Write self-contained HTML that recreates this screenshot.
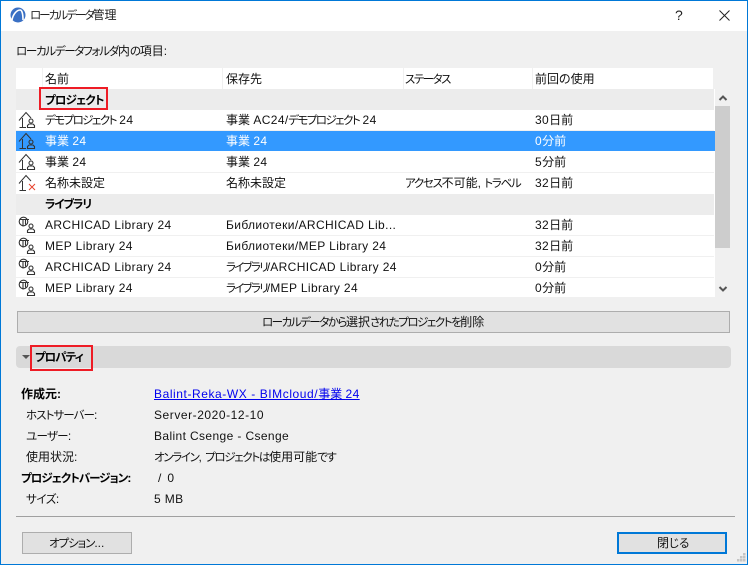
<!DOCTYPE html>
<html lang="ja"><head><meta charset="utf-8"><title>ローカルデータ管理</title>
<style>
html,body{margin:0;padding:0;background:#f0f0f0}
#w{position:relative;width:748px;height:565px;overflow:hidden;background:#f0f0f0;font:12px/16px "Liberation Sans","Noto Sans CJK JP",sans-serif;color:#111;font-feature-settings:"palt" 1}
#w div{position:absolute;box-sizing:border-box}
.t{white-space:nowrap;height:16px}
.b{font-weight:bold;color:#000}
.s{color:#fff}
i{font-style:normal;letter-spacing:.38px}
u{text-decoration:none;font-size:11.5px}
svg{position:absolute;overflow:visible}
</style></head><body><div id="w">
<div style="left:0;top:0;width:748px;height:31px;background:#fff"></div>
<div style="left:0;top:0;width:748px;height:1px;background:#0078d7"></div>
<div style="left:0;top:0;width:1px;height:565px;background:#0078d7"></div>
<div style="left:747px;top:0;width:1px;height:565px;background:#0078d7"></div>
<div style="left:0;top:564px;width:748px;height:1px;background:#0078d7"></div>

<svg style="left:10px;top:7px" width="16" height="16" viewBox="0 0 16 16"><circle cx="8" cy="8" r="7.5" fill="#3a70c4"/><path d="M2 13C3 7 7 3 10 3C12 3 13 7 13 13" fill="none" stroke="#fff" stroke-width="1.6"/></svg>
<div class="t" style="left:30px;top:7px;color:#222"><u style="letter-spacing:-1.95px">ローカルデータ</u>管理</div>
<div class="t" style="left:675px;top:7px;font-size:14px;color:#222">?</div>
<svg style="left:719px;top:10px" width="11" height="11" viewBox="0 0 11 11"><path d="M.5 .5L10.5 10.5M10.5 .5L.5 10.5" stroke="#222" fill="none"/></svg>

<div class="t" style="left:16px;top:43px"><u style="letter-spacing:-1.28px">ローカルデータフォルダ</u>内<u style="letter-spacing:-1.28px">の</u>項目:</div>

<div style="left:16px;top:68px;width:697px;height:21px;background:#fff"></div>
<div style="left:42px;top:68px;width:1px;height:21px;background:#f0f0f0"></div>
<div style="left:222px;top:68px;width:1px;height:21px;background:#f0f0f0"></div>
<div style="left:403px;top:68px;width:1px;height:21px;background:#f0f0f0"></div>
<div style="left:532px;top:68px;width:1px;height:21px;background:#f0f0f0"></div>
<div class="t" style="left:45px;top:71px">名前</div>
<div class="t" style="left:226px;top:71px">保存先</div>
<div class="t" style="left:405px;top:71px"><u style="letter-spacing:-1.51px">ステータス</u></div>
<div class="t" style="left:535px;top:71px">前回の使用</div>

<div style="left:16px;top:89px;width:699px;height:208px;background:#fff"></div>
<div style="left:16px;top:89px;width:698px;height:21px;background:#ececec"></div>
<div style="left:16px;top:194px;width:698px;height:21px;background:#ececec"></div>
<div style="left:16px;top:130px;width:698px;height:1px;background:#f0f0f0"></div>
<div style="left:16px;top:131px;width:699px;height:20px;background:#3399ff"></div>
<div style="left:16px;top:172px;width:698px;height:1px;background:#f0f0f0"></div>
<div style="left:16px;top:235px;width:698px;height:1px;background:#f0f0f0"></div>
<div style="left:16px;top:256px;width:698px;height:1px;background:#f0f0f0"></div>
<div style="left:16px;top:277px;width:698px;height:1px;background:#f0f0f0"></div>

<div class="t b" style="left:45px;top:92px"><u style="letter-spacing:-.85px">プロジェクト</u></div>
<div class="t b" style="left:45px;top:196px"><u style="letter-spacing:-1.15px">ライブラリ</u></div>

<svg width="0" height="0" style="left:0;top:0"><defs>
<g id="house" fill="none" stroke="#333" stroke-width="1"><path d="M1 9.5L8 1.5L13 7"/><path d="M4.5 7V16.5M1.5 16.5H8"/></g>
<g id="person" fill="none" stroke="#333" stroke-width="1.1"><circle cx="13" cy="10" r="2"/><path d="M9.5 16.5V14.5L11 13H15L16.5 14.5V16.5Z"/></g>
<g id="lib" fill="none" stroke="#333" stroke-width="1.1"><circle cx="5.5" cy="5.5" r="4.3"/><path d="M1.5 3.5H11M5 3.5V10.5M7.5 3.5V8.5"/></g>
</defs></svg>
<svg style="left:18px;top:111px" width="18" height="18"><use href="#house"/><use href="#person"/></svg>
<svg style="left:18px;top:132px" width="18" height="18"><use href="#house"/><use href="#person"/></svg>
<svg style="left:18px;top:153px" width="18" height="18"><use href="#house"/><use href="#person"/></svg>
<svg style="left:18px;top:174px" width="18" height="18"><use href="#house"/><path d="M11 10L17 16M17 10L11 16" stroke="#e8432e" fill="none"/></svg>
<svg style="left:18px;top:216px" width="18" height="18"><use href="#lib"/><use href="#person"/></svg>
<svg style="left:18px;top:237px" width="18" height="18"><use href="#lib"/><use href="#person"/></svg>
<svg style="left:18px;top:258px" width="18" height="18"><use href="#lib"/><use href="#person"/></svg>
<svg style="left:18px;top:279px" width="18" height="18"><use href="#lib"/><use href="#person"/></svg>

<div class="t" style="left:45px;top:112px"><u style="letter-spacing:-1.55px">デモプロジェクト</u> <i>24</i></div><div class="t" style="left:226px;top:112px">事業 <i>AC24</i>/<u style="letter-spacing:-1.55px">デモプロジェクト</u> <i>24</i></div><div class="t" style="left:535px;top:112px"><i>30</i>日前</div>
<div class="t s" style="left:45px;top:133px">事業 <i>24</i></div><div class="t s" style="left:226px;top:133px">事業 <i>24</i></div><div class="t s" style="left:535px;top:133px"><i>0</i>分前</div>
<div class="t" style="left:45px;top:154px">事業 <i>24</i></div><div class="t" style="left:226px;top:154px">事業 <i>24</i></div><div class="t" style="left:535px;top:154px"><i>5</i>分前</div>
<div class="t" style="left:45px;top:175px">名称未設定</div><div class="t" style="left:226px;top:175px">名称未設定</div><div class="t" style="left:405px;top:175px"><u style="letter-spacing:-1.29px">アクセス</u>不可能, <u style="letter-spacing:-1.29px">トラベル</u></div><div class="t" style="left:535px;top:175px"><i>32</i>日前</div>
<div class="t" style="left:45px;top:217px"><i>ARCHICAD Library 24</i></div><div class="t" style="left:226px;top:217px"><i>Библиотеки/ARCHICAD Lib...</i></div><div class="t" style="left:535px;top:217px"><i>32</i>日前</div>
<div class="t" style="left:45px;top:238px"><i>MEP Library 24</i></div><div class="t" style="left:226px;top:238px"><i>Библиотеки/MEP Library 24</i></div><div class="t" style="left:535px;top:238px"><i>32</i>日前</div>
<div class="t" style="left:45px;top:259px"><i>ARCHICAD Library 24</i></div><div class="t" style="left:226px;top:259px"><u style="letter-spacing:-1.73px">ライブラリ</u>/<i>ARCHICAD Library 24</i></div><div class="t" style="left:535px;top:259px"><i>0</i>分前</div>
<div class="t" style="left:45px;top:280px"><i>MEP Library 24</i></div><div class="t" style="left:226px;top:280px"><u style="letter-spacing:-1.73px">ライブラリ</u>/<i>MEP Library 24</i></div><div class="t" style="left:535px;top:280px"><i>0</i>分前</div>

<div style="left:715px;top:106px;width:15px;height:142px;background:#cdcdcd"></div>
<svg style="left:719px;top:95px" width="8" height="6"><path d="M.5 5L4 1.5L7.5 5" fill="none" stroke="#555" stroke-width="2"/></svg>
<svg style="left:719px;top:286px" width="8" height="6"><path d="M.5 1L4 4.5L7.5 1" fill="none" stroke="#555" stroke-width="2"/></svg>

<div style="left:17px;top:311px;width:713px;height:22px;background:#e1e1e1;border:1px solid #adadad"></div>
<div class="t" style="left:262px;top:314px"><u style="letter-spacing:-1.47px">ローカルデータから</u>選択<u style="letter-spacing:-1.47px">されたプロジェクトを</u>削除</div>

<div style="left:16px;top:346px;width:715px;height:22px;background:#d9d9d9;border-radius:4px"></div>
<svg style="left:22px;top:355px" width="8" height="5"><path d="M0 0H8L4 4Z" fill="#555"/></svg>
<div class="t b" style="left:35px;top:349px"><u style="letter-spacing:-1.05px">プロパティ</u></div>

<div style="left:39px;top:87px;width:69px;height:23px;border:2px solid #ee1c25"></div>
<div style="left:30px;top:345px;width:63px;height:26px;border:2px solid #ee1c25"></div>

<div class="t b" style="left:21px;top:386px">作成元:</div>
<div class="t" style="left:154px;top:386px;color:#00e;text-decoration:underline"><i style="letter-spacing:.57px">Balint-Reka-WX - BIMcloud/</i>事業 <i>24</i></div>
<div class="t" style="left:26px;top:407px"><u style="letter-spacing:-.95px">ホストサーバー</u>:</div><div class="t" style="left:154px;top:407px"><i style="letter-spacing:.55px">Server-2020-12-10</i></div>
<div class="t" style="left:26px;top:428px"><u style="letter-spacing:-.7px">ユーザー</u>:</div><div class="t" style="left:154px;top:428px"><i>Balint Csenge - Csenge</i></div>
<div class="t" style="left:26px;top:449px">使用状況:</div><div class="t" style="left:154px;top:449px"><u style="letter-spacing:-1.32px">オンライン</u>, <u style="letter-spacing:-1.32px">プロジェクトは</u>使用可能<u style="letter-spacing:-1.32px">です</u></div>
<div class="t b" style="left:21px;top:470px"><u style="letter-spacing:-.97px">プロジェクトバージョン</u>:</div><div class="t" style="left:158px;top:470px;word-spacing:2px"><i>/ 0</i></div>
<div class="t" style="left:26px;top:491px"><u style="letter-spacing:-.45px">サイズ</u>:</div><div class="t" style="left:154px;top:491px"><i>5 MB</i></div>

<div style="left:16px;top:516px;width:719px;height:1px;background:#a0a0a0"></div>

<div style="left:22px;top:532px;width:110px;height:22px;background:#e1e1e1;border:1px solid #adadad"></div>
<div class="t" style="left:49px;top:535px"><u style="letter-spacing:-1.05px">オプション</u>...</div>
<div style="left:617px;top:532px;width:110px;height:22px;background:#e1e1e1;border:2px solid #0078d7"></div>
<div class="t" style="left:657px;top:535px">閉<u>じる</u></div>

<svg style="left:737px;top:553px" width="10" height="10" fill="#c4c4c4"><rect x="6" y="0" width="2.5" height="2.5"/><rect x="3" y="3" width="2.5" height="2.5"/><rect x="6" y="3" width="2.5" height="2.5"/><rect x="0" y="6" width="2.5" height="2.5"/><rect x="3" y="6" width="2.5" height="2.5"/><rect x="6" y="6" width="2.5" height="2.5"/></svg>
</div></body></html>
